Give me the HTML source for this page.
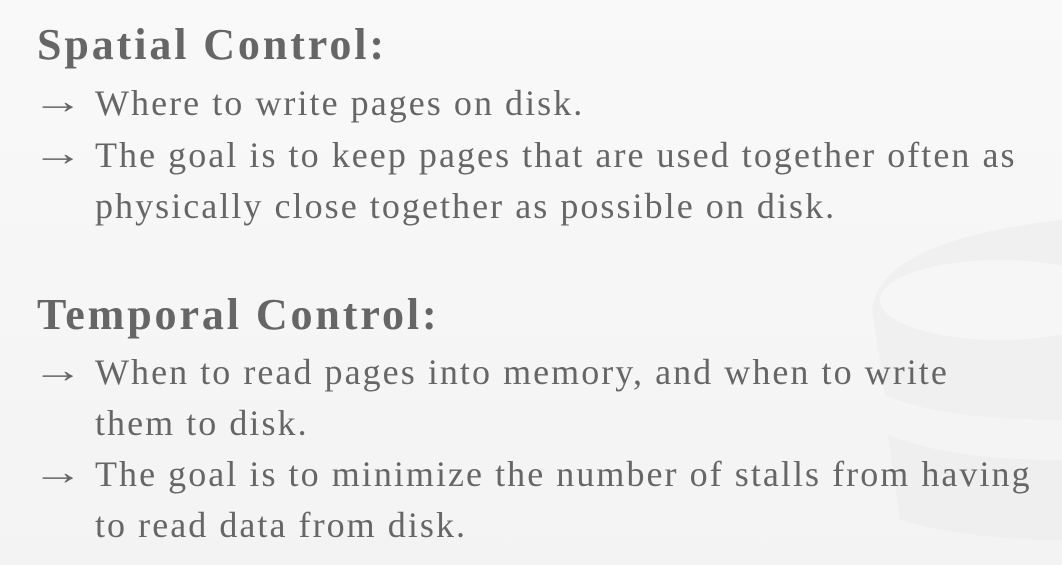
<!DOCTYPE html>
<html><head><meta charset="utf-8"><style>
html,body{margin:0;padding:0}
body{width:1062px;height:565px;overflow:hidden;position:relative;background:linear-gradient(180deg,#f9f9f9,#f3f3f3);font-family:"Liberation Serif",serif;color:#666}
.l{position:absolute;white-space:nowrap;line-height:40px;height:40px}
.h{font-weight:bold;font-size:44px;letter-spacing:2.9px;left:37px}
.b{font-size:36px;letter-spacing:2.05px}
.a{left:32px;font-size:36px;display:inline-block;transform:scaleX(1.42);transform-origin:left center;letter-spacing:0}
.t{left:95px}
svg{position:absolute;left:0;top:0}
</style></head><body>
<svg width="1062" height="565">
<path d="M872 310 Q880 240 1062 220 L1062 420 Q940 420 885 395 Z" fill="#f0f0f0"/>
<ellipse cx="1000" cy="300" rx="120" ry="40" fill="#f6f6f6"/>
<path d="M888 435 Q950 460 1062 460 L1062 540 Q970 540 900 520 Z" fill="#efefef"/>
</svg>
<div class="l h" style="top:25px">Spatial Control:</div>
<div class="l b a" style="top:81px">→</div><div class="l b t" style="top:83px">Where to write pages on disk.</div>
<div class="l b a" style="top:133px">→</div><div class="l b t" style="top:135px">The goal is to keep pages that are used together often as</div>
<div class="l b t" style="top:186px">physically close together as possible on disk.</div>
<div class="l h" style="top:295px">Temporal Control:</div>
<div class="l b a" style="top:350px">→</div><div class="l b t" style="top:352px">When to read pages into memory, and when to write</div>
<div class="l b t" style="top:403px">them to disk.</div>
<div class="l b a" style="top:452px">→</div><div class="l b t" style="top:454px">The goal is to minimize the number of stalls from having</div>
<div class="l b t" style="top:505px">to read data from disk.</div>
</body></html>
